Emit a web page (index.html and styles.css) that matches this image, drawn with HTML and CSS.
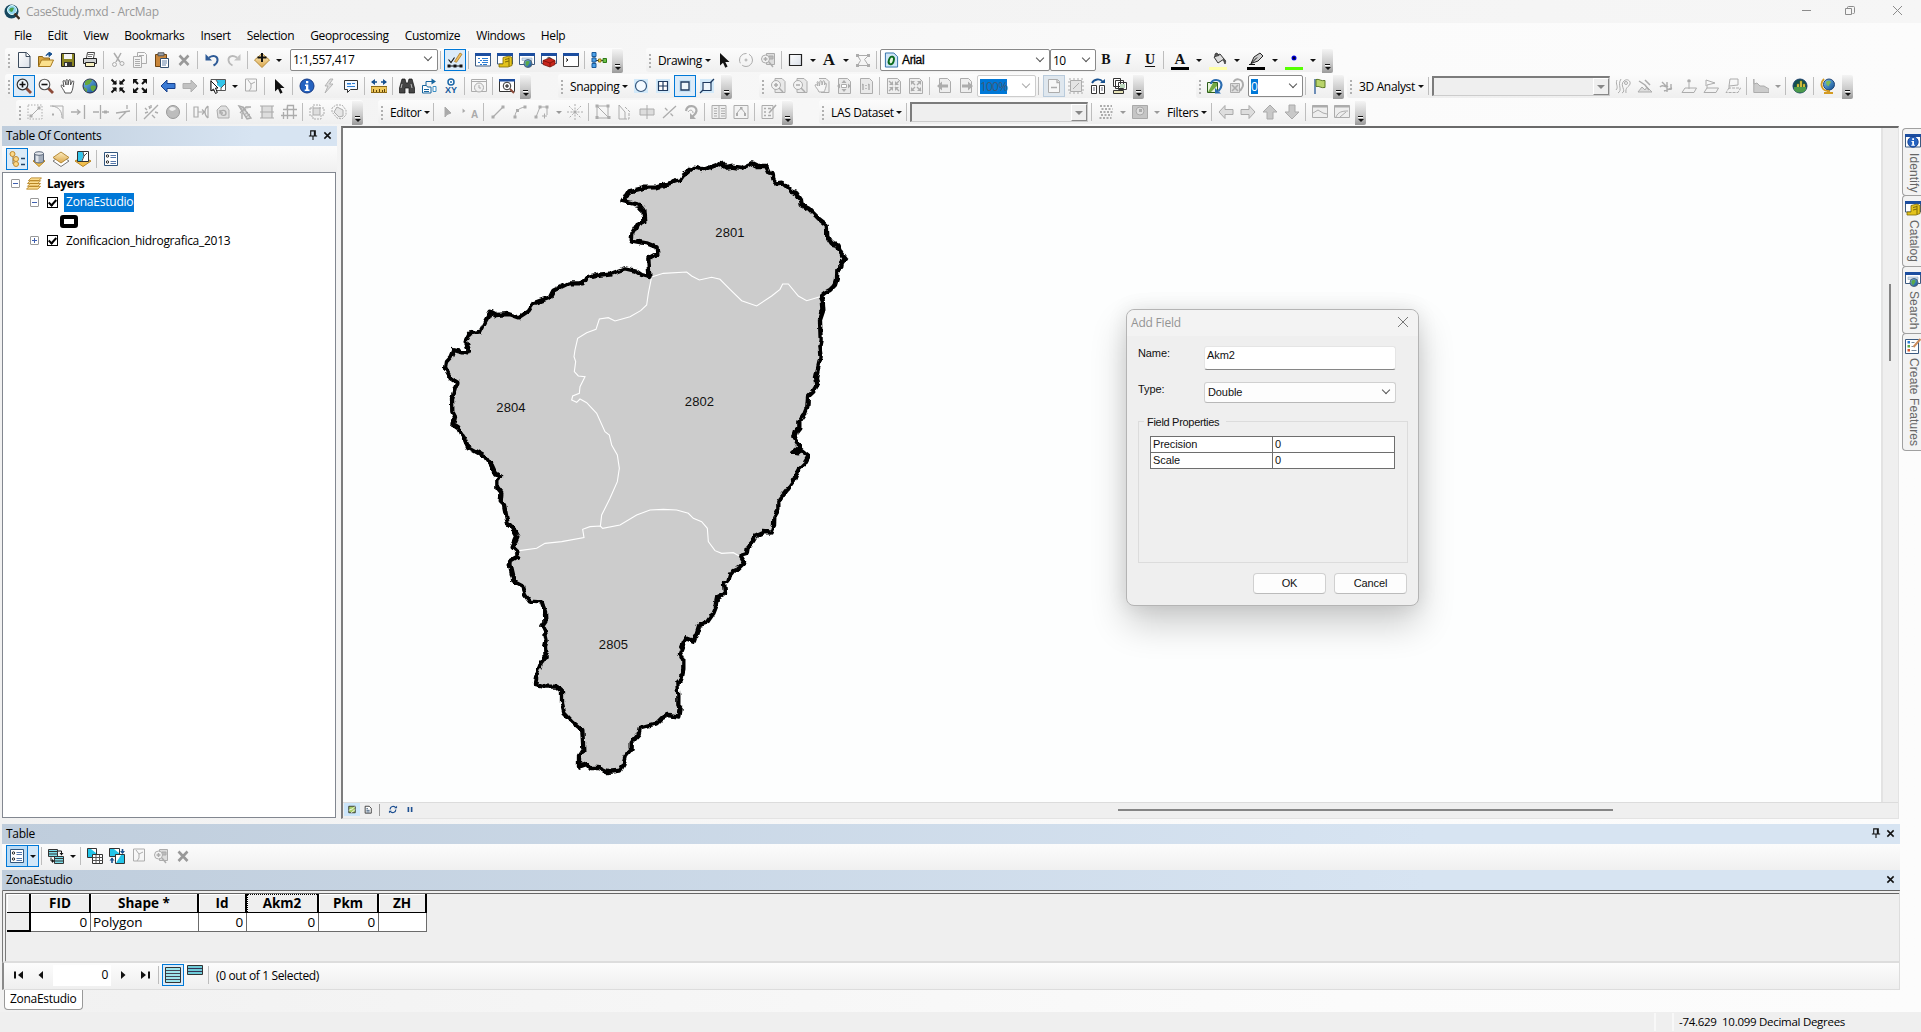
FILE: index.html
```html
<!DOCTYPE html>
<html lang="en">
<head>
<meta charset="utf-8">
<title>CaseStudy.mxd - ArcMap</title>
<link rel="stylesheet" href="styles.css">
</head>
<body>
<svg class="sprite" aria-hidden="true">
<defs>
<linearGradient id="gGlobe" x1="0" y1="0" x2="1" y2="1"><stop offset="0" stop-color="#7cc4f0"/><stop offset="1" stop-color="#0d4a8c"/></linearGradient>
<linearGradient id="gTan" x1="0" y1="0" x2="0" y2="1"><stop offset="0" stop-color="#fdeec0"/><stop offset="1" stop-color="#dba64a"/></linearGradient>
<linearGradient id="gPaper" x1="0" y1="0" x2="1" y2="1"><stop offset="0" stop-color="#fff"/><stop offset="1" stop-color="#d9dfe8"/></linearGradient>
<filter id="rough" x="-5%" y="-5%" width="110%" height="110%"><feTurbulence type="fractalNoise" baseFrequency=".05" numOctaves="2" seed="4"/><feDisplacementMap in="SourceGraphic" scale="15" xChannelSelector="R" yChannelSelector="G"/></filter>
</defs>
<symbol id="new" viewBox="0 0 16 16"><path d="M2.500 .5h8l3.500 3.500v11.500h-11.500z" fill="url(#gPaper)" stroke="#3b4a5c"/><path d="M10 .5v4h4" fill="#fff" stroke="#3b4a5c"/></symbol>
<symbol id="open" viewBox="0 0 16 16"><path d="M.5 14.500v-10h4l1 1.500h6v3" fill="#d9a640" stroke="#8d6415"/><path d="M.5 14.500l3-6.500h12l-3 6.500z" fill="#fbe08c" stroke="#a87a20"/><path d="M8 4c1-3 3-3 4.500-2.500M11 0l3 2-3 2.500z" stroke="#17508f" fill="#17508f" stroke-width="1"/></symbol>
<symbol id="save" viewBox="0 0 16 16"><path d="M1.500 1.500h13v13h-13z" fill="#8a8422" stroke="#222"/><path d="M4 2h8v5h-8z" fill="#f4f4f4"/><path d="M4 10h8v4.500h-8z" fill="#333"/><path d="M5 11h2v3h-2z" fill="#eee"/></symbol>
<symbol id="print" viewBox="0 0 16 16"><path d="M4.500 6l1-5.500h7l-1 5.500" fill="#fff" stroke="#444"/><path d="M1.500 6.500h13v5h-13z" fill="#cfd2d4" stroke="#222"/><path d="M3.500 10.500h9v4h-9z" fill="#f7f0c0" stroke="#222"/><path d="M6 2.500h5M6 4.500h4" stroke="#777"/></symbol>
<symbol id="cut" viewBox="0 0 16 16"><g class="g"><path d="M4 1l6 9M11 1L6 10" stroke-width="1.500"/><circle cx="4.500" cy="12.500" r="2"/><circle cx="12" cy="11.500" r="2"/></g></symbol>
<symbol id="copy" viewBox="0 0 16 16"><g class="g"><path d="M5.500 .5h7l2 2v9h-9z"/><path d="M1.500 4.500h8v11h-8z" fill="#f3f3f3"/><path d="M3 7.500h5M3 9.500h5M3 11.500h5M3 13.500h5M7 3.500h5"/></g></symbol>
<symbol id="paste" viewBox="0 0 16 16"><path d="M1.500 2.500h11v12h-11z" fill="#c9863a" stroke="#6d4412"/><path d="M4 .8h6v3H4z" fill="#9aa0a8" stroke="#555"/><path d="M6.500 6.500h8v9h-8z" fill="#fff" stroke="#35506f"/><path d="M8 9h5M8 11h5M8 13h4" stroke="#6482a8"/></symbol>
<symbol id="del" viewBox="0 0 16 16"><path d="M3.500 3.500l9 9.500M12.500 3.500l-9 9.500" stroke="#999" stroke-width="2.600" fill="none"/></symbol>
<symbol id="undo" viewBox="0 0 16 16"><path d="M5 5.500c5-3 9-1 8.500 3-.3 2.500-2 4-4 5" fill="none" stroke="#2d5a96" stroke-width="2"/><path d="M1.500 2v6.500h6.500z" fill="#2d5a96"/></symbol>
<symbol id="redo" viewBox="0 0 16 16"><path d="M11 5.500c-5-3-9-1-8.500 3 .3 2.500 2 4 4 5" fill="none" stroke="#b9b9b9" stroke-width="1.800"/><path d="M14.500 2v6.500h-6.500z" fill="#c4c4c4"/></symbol>
<symbol id="add" viewBox="0 0 16 16"><path d="M8 1.500l7.500 6.500-7.500 7.500L.5 8z" fill="url(#gTan)" stroke="#b58b3a"/><path d="M7 1h2v3.500h3.500v2H9V10H7V6.500H3.500v-2H7z" fill="#111"/></symbol>
<symbol id="edtb" viewBox="0 0 16 16"><path d="M1.500 7.500l2.500 3 3.500-5" fill="none" stroke="#111" stroke-width="1.100"/><path d="M7.500 9.500l5.500-8.500 2 1.300-5.500 8z" fill="#f0c060" stroke="#a06a10" stroke-width=".7"/><path d="M1.500 14h13" stroke="#111"/><path d="M.5 12.500h3v3h-3zM6.500 12.500h3v3h-3zM12.500 12.500h3v3h-3z" fill="#111"/></symbol>
<symbol id="toc" viewBox="0 0 16 16"><path d="M.5 1.500h15v12.500h-15z" fill="#fff" stroke="#3c5a80"/><path d="M0 1h16v3H0z" fill="#1c4ea0"/><path d="M3 6.500h2M7 6.500h6M5 8.500h2M8 8.500h5M3 10.500h2M7 10.500h6M5 12.500h2M8 12.500h4" stroke="#2d7dd2"/></symbol>
<symbol id="cat" viewBox="0 0 16 16"><path d="M.5 1.500h15v10.500h-15z" fill="#fff" stroke="#3c5a80"/><path d="M0 1h16v3H0z" fill="#1c4ea0"/><path d="M6 5.500l6-1.500 3 1.500v8l-4 1.500h-9v-3h4z" fill="#e3c31d" stroke="#7f6a05" stroke-width=".8"/><path d="M8 7.500l4-1M8 10l4-1M12 5.500v9" stroke="#7f6a05" fill="none"/></symbol>
<symbol id="search" viewBox="0 0 16 16"><path d="M.5 1.500h15v11h-15z" fill="#fff" stroke="#3c5a80"/><path d="M0 1h16v3H0z" fill="#1c4ea0"/><path d="M3 6h10v2.500H3z" fill="#cfe2f5" stroke="#9ab" stroke-width=".6"/><circle cx="9" cy="11.500" r="4" fill="url(#gGlobe)" stroke="#567"/><path d="M6.500 10c2-2 3 0 4-1 0 3-1 3-2 5-2 0-2-2-2-4z" fill="#5aa848"/></symbol>
<symbol id="tbx" viewBox="0 0 16 16"><path d="M.5 1.500h15v10h-15z" fill="#fff" stroke="#3c5a80"/><path d="M0 1h16v3H0z" fill="#1c4ea0"/><path d="M2 8.500l7-2.500 5 2.500v4l-5 2.500-7-2.500z" fill="#c8261d" stroke="#731008" stroke-width=".8"/><path d="M2 8.500l7 2.500 5-2.500M9 11v4" stroke="#731008" fill="none" stroke-width=".8"/><path d="M6 6.500c1-2 4-1 4 .5" stroke="#333" fill="none"/></symbol>
<symbol id="py" viewBox="0 0 16 16"><path d="M.5 1.500h15v13h-15z" fill="#fff" stroke="#444"/><path d="M0 1h16v3H0z" fill="#1c4ea0"/><path d="M3 6.500l2 1.500-2 1.500" stroke="#111" fill="none"/></symbol>
<symbol id="model" viewBox="0 0 16 16"><path d="M3 3v10M3 8.500h12" stroke="#333" fill="none"/><path d="M1 .5h4v4H1zM1 11.500h4v4H1zM1 6h4v4H1z" fill="#4aa0e8" stroke="#1b5a9a"/><path d="M7.500 7h2.500v3H7.500z" fill="#f6d23c" stroke="#8b7310"/><path d="M12 6.500h3.500v4H12z" fill="#6cc048" stroke="#2e7a18"/></symbol>
<symbol id="zin" viewBox="0 0 16 16"><path d="M10 10l5 5" stroke="#8c4a38" stroke-width="2.800"/><circle cx="6.500" cy="6.500" r="5.300" fill="#eef5fb" stroke="#333" stroke-width="1.200"/><path d="M3.500 6.500h6M6.500 3.500v6" stroke="#111" stroke-width="1.600"/></symbol>
<symbol id="zout" viewBox="0 0 16 16"><path d="M10 10l5 5" stroke="#8c4a38" stroke-width="2.800"/><circle cx="6.500" cy="6.500" r="5.300" fill="#f8fafc" stroke="#555" stroke-width="1.100"/><path d="M3.500 6.500h6" stroke="#111" stroke-width="1.600"/></symbol>
<symbol id="hand" viewBox="0 0 16 16"><path d="M5 15C4 12 1 9 1 7.500c1-1 2 0 3 1.500L3 3c1-1 2 0 2.300 1L6 7V2c1-1 2 0 2 1v4l1-5c1-1 2 0 1.800 1L10.500 7l2-4c1-.5 1.500.5 1.200 1.500C13 8 13 12 11 15z" fill="#fff" stroke="#444" stroke-width=".9"/></symbol>
<symbol id="globe" viewBox="0 0 16 16"><circle cx="8" cy="8" r="7" fill="url(#gGlobe)" stroke="#224"/><path d="M3 4c2-3 6-3 7-2 0 2-2 2-2 4-2 0-3 2-5 1zM9 8c3-1 5 0 5 1-1 3-3 5-4 4-1-2-2-3-1-5zM2 9l3 2v3c-2-1-3-3-3-5z" fill="#67a83c"/></symbol>
<symbol id="fixin" viewBox="0 0 16 16"><path d="M1.500 1.500L6 6M14.500 1.500L10 6M1.500 14.500L6 10M14.500 14.500L10 10" stroke="#111" stroke-width="2"/><path d="M2 6.500h4.500V2zM14 6.500H9.500V2zM2 9.500h4.500V14zM14 9.500H9.500V14z" fill="#111"/></symbol>
<symbol id="fixout" viewBox="0 0 16 16"><path d="M2 2l4 4M14 2l-4 4M2 14l4-4M14 14l-4-4" stroke="#111" stroke-width="2"/><path d="M1 1h5L1 6zM15 1h-5l5 5zM1 15h5l-5-5zM15 15h-5l5-5z" fill="#111"/></symbol>
<symbol id="back" viewBox="0 0 16 16"><path d="M1 8l6-6v3.500h8v5H7V14z" fill="#3a7ad4" stroke="#17408c"/></symbol>
<symbol id="fwd" viewBox="0 0 16 16"><path d="M15 8L9 2v3.500H1v5h8V14z" fill="#c2c2c2" stroke="#b0b0b0"/></symbol>
<symbol id="sel" viewBox="0 0 16 16"><path d="M1 1.500h14.500v11H1z" fill="#fff" stroke="#555"/><path d="M7 2h8v4l-4 4-4-3z" fill="#33c5ea"/><path d="M11 10l4-4M8 5L6 2M11 10v2" stroke="#555" fill="none"/><path d="M1 3v10l2.500-2 2 4.500 1.800-1L5.500 10H8z" fill="#fff" stroke="#111"/></symbol>
<symbol id="clear" viewBox="0 0 16 16"><g class="g"><path d="M2.500 1h11v12h-11z"/><path d="M5 2l3 4 4-2M8 6v4l-2 3"/></g></symbol>
<symbol id="arrow" viewBox="0 0 16 16"><path d="M4 1v12.500l3-2.700 2.300 5 2.300-1.200-2.300-4.600H13.500z" fill="#111"/></symbol>
<symbol id="info" viewBox="0 0 16 16"><circle cx="8" cy="8" r="7" fill="#2563c0" stroke="#153a86"/><path d="M7 3h2.300v2.200H7zM6 6.500h3.300v5h1.200V13H5.700v-1.500H7V8H6z" fill="#fff"/></symbol>
<symbol id="bolt" viewBox="0 0 16 16"><path d="M9 1L4 8h3l-3 7 8-9H8.500L12 1z" fill="#ddd" stroke="#aaa" stroke-width=".8"/></symbol>
<symbol id="popup" viewBox="0 0 16 16"><path d="M1.500 2.500h13v9h-7l-3 3v-3h-3z" fill="#f5f9ff" stroke="#333"/><path d="M4 5h4v1.500H4zM4 8h8v1H4zM9 5h3v1H9z" fill="#2d7dd2"/></symbol>
<symbol id="measure" viewBox="0 0 16 16"><path d="M0 8.500h16v6H0z" fill="#f1c95e" stroke="#8d6a15"/><path d="M2.500 14v-3M5.500 14v-2M8.500 14v-3M11.500 14v-2M13.500 14v-3" stroke="#5d440b"/><path d="M1 4h5M10 4h5" stroke="#17508f" stroke-width="1.500"/><path d="M0 4l4-3v6zM16 4l-4-3v6z" fill="#17508f"/></symbol>
<symbol id="binoc" viewBox="0 0 16 16"><path d="M3 1h3l1 4h2l1-4h3l2.500 9v5H10v-5H6v5H.5v-5z" fill="#444" stroke="#111" stroke-width=".7"/><path d="M3 6l-1 4M12 6l1 4" stroke="#bbb"/></symbol>
<symbol id="route" viewBox="0 0 16 16"><path d="M1.500 7.500h4l1 1.500h3.500v6h-8.500z" fill="#fff" stroke="#17659e"/><path d="M3 11.500h5M3 13.500h5M5 7V3.500h7" stroke="#17659e" fill="none"/><path d="M10.500 .5l4.500 3-4.500 3z" fill="#17659e"/><path d="M12 8.500h3v5h-3z" fill="#fff" stroke="#3d8fc4"/></symbol>
<symbol id="xy" viewBox="0 0 16 8"><circle cx="8" cy="4" r="3" fill="#fff" stroke="#1b67a8" stroke-width="1.500"/><circle cx="8" cy="4" r="1" fill="#1b67a8"/></symbol>
<symbol id="clock" viewBox="0 0 16 16"><g class="g"><path d="M.5 1.500h15v12H.5zM.5 3.500h15"/><circle cx="8" cy="9.500" r="4.500" fill="#f0f0f0"/><path d="M8 7v3h2"/></g></symbol>
<symbol id="viewer" viewBox="0 0 16 16"><path d="M.5 1.500h15v12H.5z" fill="#fff" stroke="#333"/><path d="M0 1h16v2.500H0z" fill="#1c4ea0"/><path d="M11 11l4 4" stroke="#8c4a38" stroke-width="2"/><circle cx="8" cy="8" r="3.800" fill="#fff" stroke="#333"/><path d="M6 8h4M8 6v4" stroke="#111"/></symbol>
<symbol id="rot" viewBox="0 0 16 16"><g class="g"><circle cx="8" cy="8" r="6.500" stroke-dasharray="14 2.500"/><circle cx="8" cy="8" r="1"/></g></symbol>
<symbol id="zsel" viewBox="0 0 16 16"><g class="g"><path d="M6.500 1.500h8v11h-8z" fill="#ddd"/><path d="M9 4h4v3H9z" fill="#bbb"/><circle cx="5.500" cy="7" r="4" fill="#f3f3f3"/><path d="M5.500 5v4M3.500 7h4M9 10l4 5" stroke-width="1.500"/></g></symbol>
<symbol id="rect" viewBox="0 0 16 16"><path d="M1.500 2.500h12v11h-12z" fill="url(#gPaper)" stroke="#222" stroke-width="1.200"/></symbol>
<symbol id="verts" viewBox="0 0 16 16"><g class="g"><path d="M2.500 3.500h11l-4 4 4 6h-11l3-5z"/><path class="gf" d="M1 2h3v3H1zM12 2h3v3h-3zM1 12h3v3H1zM12 12h3v3h-3z"/></g></symbol>
<symbol id="font" viewBox="0 0 16 16"><path d="M1.500 .5h9l4 4v11h-13z" fill="#cfe6f8" stroke="#2d6ea8"/><ellipse cx="7.800" cy="8.500" rx="2.600" ry="4.200" transform="rotate(18 7.800 8.500)" fill="#e8f6e0" stroke="#0a6a1e" stroke-width="2"/></symbol>
<symbol id="bucket" viewBox="0 0 20 14"><path d="M6 5l6-3 4 5-6 4z" fill="#ddd" stroke="#333"/><path d="M7 5c-1-5 3-5 4-1M16 7c2 1 2 3 1 5-1-2-1-3-2-4" fill="#555" stroke="#333" stroke-width=".8"/></symbol>
<symbol id="pen" viewBox="0 0 20 14"><path d="M5 11.500l3-6.500 6-4 3 3-5 5z" fill="#ccc" stroke="#222"/><path d="M5 11.500l6-6M3 12.500h6" stroke="#111"/></symbol>
<symbol id="mark" viewBox="0 0 20 14"><circle cx="10" cy="6" r="2.500" fill="#00e"/><circle cx="10" cy="6" r="1.500" fill="#003"/></symbol>
<symbol id="scirc" viewBox="0 0 16 16"><path d="M1 1h14v14H1z" fill="#d3eafa"/><circle cx="8" cy="8" r="5.500" fill="#f4faff" stroke="#33557c" stroke-width="1.200"/></symbol>
<symbol id="sgrid" viewBox="0 0 16 16"><path d="M1 1h14v14H1z" fill="#d3eafa"/><path d="M3.500 3.500h9v9h-9zM8 3.500v9M3.500 8h9" fill="#fff" stroke="#1f3a5f" stroke-width="1.200"/></symbol>
<symbol id="svert" viewBox="0 0 16 16"><path d="M2 2h12v12H2z" fill="#c4e0f5"/><path d="M4 4h8v8H4z" fill="#eef6fc" stroke="#1f3a5f" stroke-width="1.300"/></symbol>
<symbol id="sedge" viewBox="0 0 16 16"><path d="M1 1h14v14H1z" fill="#d3eafa"/><path d="M4 4.500h8v8H4z" fill="#eef6fc" stroke="#1f3a5f" stroke-width="1.200"/><path d="M1 15l3-3M11 5l4-4" stroke="#1f3a5f" stroke-width="1.300"/></symbol>
<symbol id="pzin" viewBox="0 0 16 16"><g class="g"><path d="M5 .5h7l3 3v11H5z" fill="#e9e9e9"/><circle cx="6" cy="7" r="4.500" fill="#f3f3f3"/><path d="M4 7h4M6 5v4M9 10l4 4" stroke-width="1.500"/></g></symbol>
<symbol id="pzout" viewBox="0 0 16 16"><g class="g"><path d="M5 .5h7l3 3v11H5z" fill="#e9e9e9"/><circle cx="6" cy="7" r="4.500" fill="#f3f3f3"/><path d="M4 7h4M9 10l4 4" stroke-width="1.500"/></g></symbol>
<symbol id="ppan" viewBox="0 0 16 16"><g class="g"><path d="M5 .5h7l3 3v11H7" fill="#eee"/><path d="M5 14C4 11 1 9 1 7c1-1 2 0 3 1L3 4c1-1 2 0 2.500 4L6 3c1-1 2 0 2 4l1-4c1-1 2 0 1.500 4l1-2c2 0 0 6-1.500 9z" fill="#f6f6f6"/></g></symbol>
<symbol id="pfull" viewBox="0 0 16 16"><g class="g"><path d="M2.500 .5h9l3 3v12h-12z" fill="#e9e9e9"/><path class="gf" d="M8 2l2.500 3h-5zM8 14l2.500-3h-5zM1 8l3-2.500v5zM15 8l-3-2.500v5z"/><path d="M5.500 6.500h5v3h-5z" fill="#fff"/></g></symbol>
<symbol id="p11" viewBox="0 0 16 16"><g class="g"><path d="M2.500 .5h9l3 3v12h-12z" fill="#e9e9e9"/><path d="M5 6v6M11 6v6M8 7v1M8 10v1M4 6.500h1M10 6.500h1" stroke-width="1.400"/></g></symbol>
<symbol id="pin4" viewBox="0 0 16 16"><g class="g"><path d="M1.500 .5h10l3 3v12h-13z" fill="#eee"/><path class="gf" d="M3 7h4V3zM13 7H9V3zM3 9h4v4zM13 9H9v4z"/><path d="M3 3l4 4M13 3L9 7M3 13l4-4M13 13L9 9" stroke-width="1.300"/></g></symbol>
<symbol id="pout4" viewBox="0 0 16 16"><g class="g"><path d="M1.500 .5h10l3 3v12h-13z" fill="#eee"/><path class="gf" d="M3 3h4L3 7zM13 3H9l4 4zM3 13h4L3 9zM13 13H9l4-4z"/><path d="M3 3l4 4M13 3L9 7M3 13l4-4M13 13L9 9" stroke-width="1.300"/></g></symbol>
<symbol id="pback" viewBox="0 0 16 16"><g class="g"><path d="M3.500 .5h8l3 3v11h-11z" fill="#eee"/><path class="gf" d="M1 8l5-4.500v3h6v3H6v3z"/></g></symbol>
<symbol id="pfwd" viewBox="0 0 16 16"><g class="g"><path d="M2.500 .5h8l3 3v11h-11z" fill="#eee"/><path class="gf" d="M15 8l-5-4.500v3H4v3h6v3z"/></g></symbol>
<symbol id="draft" viewBox="0 0 16 16"><g class="g"><path d="M2.500 1.500h9l2 2v11h-11z" fill="#f7f7f7"/><path d="M5 9.500h6M11 1.500v3h3" stroke-width="1.300"/></g></symbol>
<symbol id="focus" viewBox="0 0 16 16"><g class="g"><path d="M2.500 2.500h11v11h-11z" fill="#e4e4e4"/><path d="M1 1h14v14H1z" stroke-dasharray="2 2"/><path d="M5 11l6-6"/></g></symbol>
<symbol id="chlay" viewBox="0 0 16 16"><path d="M1.500 7.500h5v8h-5zM9.500 7.500h5v8h-5z" fill="#fff" stroke="#333"/><path d="M3 10h2M3 12h2M11 10h2M11 12h2" stroke="#667"/><path d="M2 5c2-4 8-5 11-1" fill="none" stroke="#17508f" stroke-width="1.800"/><path d="M10 5h5V1z" fill="#17508f"/></symbol>
<symbol id="ddp" viewBox="0 0 16 16"><path d="M1.500 .5h7v8h-7zM3.500 2.500h8v8h-8zM6.500 4.500h8v7h-8z" fill="#fff" stroke="#333"/><path d="M8 6h5v4H8z" fill="#bcd8bc"/><path d="M1.500 12.500h10v3h-10z" fill="#e8e4b8" stroke="#333"/></symbol>
<symbol id="refr" viewBox="0 0 16 16"><path d="M.5 4.500h10v10h-10z" fill="#e9f4dd" stroke="#2c5d1a"/><path d="M1 14l5-9h4v3L4 14z" fill="#74a944"/><path d="M4 6c0-5 10-6 10.500 1 0 3-1 4-3 6" fill="none" stroke="#2b6cb0" stroke-width="2.200"/><path d="M8 10v5.500h6z" fill="#2b6cb0"/></symbol>
<symbol id="grefr" viewBox="0 0 16 16"><g class="g"><path d="M1.500 5.500h9v9h-9z" fill="#ddd"/><path d="M3 7l6 6M9 7l-6 6" stroke-width="1.600"/><path d="M5 4c0-4 9-4 9 3 0 3-2 4-3 6" stroke-width="2"/></g></symbol>
<symbol id="flag" viewBox="0 0 16 16"><path d="M3 1v15" stroke="#4c74a8" stroke-width="1.600"/><path d="M4 1.500c3-1 5 2 9 1v7c-4 1-6-2-9-1z" fill="#b9d46a" stroke="#5c7a26"/></symbol>
<symbol id="contour" viewBox="0 0 16 16"><g class="g"><circle cx="11" cy="5" r="1.500"/><path d="M7 15c5-2-3-8 2-12 3-3 7 0 6 3s-5 3-4 9M3 15c5-3-1-8 3-14M1 12c3-3-1-6 1-10"/></g></symbol>
<symbol id="steep" viewBox="0 0 16 16"><g class="g"><path d="M1 14l4-5 3 3 2-3 5 5z" fill="#ddd"/><path d="M2 3l6 4 4 5M8 2l5 5" stroke-width="1.500"/></g></symbol>
<symbol id="los" viewBox="0 0 16 16"><g class="g"><path d="M1 9c3-4 5 2 8-1M3 4l5 5M8 4v10M5 13l8-3M12 6v6" stroke-width="1.400"/></g></symbol>
<symbol id="ip" viewBox="0 0 16 16"><g class="g"><circle cx="8" cy="3" r="1.800" class="gf"/><path d="M8 5v6M4 10L1 14.500h12L15.500 10z"/></g></symbol>
<symbol id="il" viewBox="0 0 16 16"><g class="g"><path d="M3 2l9 3-8 2M4 7v3M4 10L1 14.500h12L15.500 10zM3 2v6"/></g></symbol>
<symbol id="ig" viewBox="0 0 16 16"><g class="g"><path d="M5 1h8v6L4 8zM4 8v3"/><path d="M4 10L1 14.500h12L15.500 10z" stroke-dasharray="3 1"/></g></symbol>
<symbol id="prof" viewBox="0 0 16 16"><g class="g"><path d="M.8 1v13.500H16V11l-5-3-4 0-3-3-3 1z" fill="#ccc"/></g></symbol>
<symbol id="scene" viewBox="0 0 16 16"><circle cx="8" cy="8" r="7" fill="#12504e" stroke="#1b3f6b"/><path d="M2 9h12v3l-3 2.500H5L2 12z" fill="#4b9a4b"/><path d="M5 9V6h2v3M8 9V3h2v6M11 9V6h2v3" fill="#e6cf45" stroke="#8b7a15" stroke-width=".5"/></symbol>
<symbol id="aglobe" viewBox="0 0 16 16"><path d="M4 1c-5 5-2 13 6 12" fill="none" stroke="#d49b22" stroke-width="1.800"/><circle cx="9" cy="6.500" r="5.500" fill="url(#gGlobe)" stroke="#247"/><path d="M6 4c2-2 4-1 5 0-1 2-2 2-2 4-2 0-3-2-3-4z" fill="#7dbb55"/><path d="M8 12v2M4 15h9" stroke="#d49b22" stroke-width="2"/></symbol>
<symbol id="e1" viewBox="0 0 16 16"><g class="g"><path d="M1 1h14v14H1z" stroke-dasharray="1.500 1.500"/><path d="M4 12l8-8" /><path class="gf" d="M2.500 10.500h3v3h-3zM10.500 2.500h3v3h-3z"/></g></symbol>
<symbol id="e2" viewBox="0 0 16 16"><g class="g"><path d="M1 2h13v13M3 2c7 1 10 5 10 12"/><path class="gf" d="M3 9.500h2v2H3z"/></g></symbol>
<symbol id="e3" viewBox="0 0 16 16"><g class="g"><path d="M0 8h9M13.500 1v14M6 5.500l3 2.500-3 2.500" stroke-width="1.300"/></g></symbol>
<symbol id="e4" viewBox="0 0 16 16"><g class="g"><path d="M0 8h6M7.500 1v14M9 8h7" stroke-width="1.300"/><path class="gf" d="M11 6.500h3v3h-3z"/></g></symbol>
<symbol id="e5" viewBox="0 0 16 16"><g class="g"><path d="M1 9l14-2M12 1v4M11 8L4 15" stroke-width="1.300"/></g></symbol>
<symbol id="e6" viewBox="0 0 16 16"><g class="g"><path d="M1 15L15 1M2 4l2 2M8 1v3M12 8l3 1M9 11l3 3M6 2l1 3M2 9l3-1" stroke-width="1.400"/></g></symbol>
<symbol id="ball" viewBox="0 0 16 16"><circle cx="8" cy="8" r="6.500" fill="#bdbdbd" stroke="#999"/><path d="M4 5c2-3 6-2 7 0-2 2-5 3-7 0z" fill="#eee"/></symbol>
<symbol id="e7" viewBox="0 0 16 16"><g class="g"><path d="M1 3h4v10H1zM15 2c-4 3-4 9 0 12M5 8h6M9 5.500L11.500 8 9 10.500M15 2v12" stroke-width="1.200"/></g></symbol>
<symbol id="e8" viewBox="0 0 16 16"><g class="g"><path d="M2 6l4-4h5l3 4v8H3z" fill="#e0e0e0"/><path d="M5 9c1-4 6-3 6 0s-4 3-5 1M5 6v3h3" stroke-width="1.400"/></g></symbol>
<symbol id="e9" viewBox="0 0 16 16"><g class="g"><path d="M2 2l4 1 8 11-4 1zM5 15V9M3 9l6-6 5 0" stroke-width="1.400" fill="#ddd"/><path d="M3 5l4-2M5 8l4-3M7 11l4-3M9 13l4-3"/></g></symbol>
<symbol id="e10" viewBox="0 0 16 16"><g class="g"><path d="M3 2h10v12H3zM1 2h14M1 8h14M1 14h14" fill="#ddd" stroke-width="1.200"/></g></symbol>
<symbol id="e11" viewBox="0 0 16 16"><g class="g"><path d="M6.500 1v14M12.500 1v14M2 5.500h14M0 11.500h16M2.500 8v7M6 5.500h6.500V1.500H6.500z" stroke-width="1.300"/></g></symbol>
<symbol id="e12" viewBox="0 0 16 16"><g class="g"><path d="M1 4h3V1h7v3h4v7h-3v4H4v-3H1z" stroke-dasharray="2 1"/><path d="M4 4h7v7H4z" fill="#ddd"/></g></symbol>
<symbol id="e13" viewBox="0 0 16 16"><g class="g"><path d="M5 1h6l4 5v5l-4 4-5-1-5-6V4z" stroke-dasharray="2 1"/><path d="M6 3l6 3v6l-4 1-5-5z" fill="#e6e6e6"/></g></symbol>
<symbol id="ea" viewBox="0 0 16 16"><path d="M5 3v10l2-2.500L11 9z" fill="#aaa" stroke="#aaa"/></symbol>
<symbol id="tri" viewBox="0 0 16 16"><path d="M1 1v8l5-3.500z" fill="#aaa"/></symbol>
<symbol id="eline" viewBox="0 0 16 16"><g class="g"><path d="M3 13L13 3" stroke-width="1.300"/><path class="gf" d="M1.500 11.500h3v3h-3zM11.500 1.500h3v3h-3z"/></g></symbol>
<symbol id="earc" viewBox="0 0 16 16"><g class="g"><path d="M3 13C3 7 7 4 13 3"/><path class="gf" d="M1.500 11.500h3v3h-3zM4 5h3v3H4zM11.500 1.500h3v3h-3z"/></g></symbol>
<symbol id="etr" viewBox="0 0 16 16"><g class="g"><path d="M2 13L6 3h7v8"/><path class="gf" d="M.5 11.500h3v3h-3zM4.500 1.500h3v3h-3zM11.500 1.500h3v3h-3z"/><path d="M8 12h5M10.500 9.500v5"/></g></symbol>
<symbol id="epoint" viewBox="0 0 16 16"><g class="g"><path d="M8 0v16M0 8h16M2 2l12 12M14 2L2 14" stroke-dasharray="2 1.500"/><path class="gf" d="M6.500 6.500h3v3h-3z"/></g></symbol>
<symbol id="ever" viewBox="0 0 16 16"><g class="g"><path d="M2 2h11v12H2zM2 2l12 12"/><path class="gf" d="M.5 .5h3v3h-3zM11.500 .5h3v3h-3zM.5 12h3v3h-3zM12.500 12h3v3h-3z"/></g></symbol>
<symbol id="eresh" viewBox="0 0 16 16"><g class="g"><path d="M2 1v14h6V8z"/><path d="M8 3l5 5M12 9v6H8" stroke-dasharray="3 1"/></g></symbol>
<symbol id="ecut" viewBox="0 0 16 16"><g class="g"><path d="M1 5h14v6H1z" fill="#ddd"/><path d="M8 1v14"/></g></symbol>
<symbol id="esplit" viewBox="0 0 16 16"><g class="g"><path d="M2 14L15 2M4 4l2.500 2.500M9.500 9.500L12 12" stroke-width="1.300"/></g></symbol>
<symbol id="erot" viewBox="0 0 16 16"><g class="g"><path d="M3 7c1-7 11-6 10.500 0-.5 3-2.500 4-4.500 6" stroke-width="2.200"/><path class="gf" d="M7 9v6h6z"/><path d="M5 8c2-3 5-2 5 1"/></g></symbol>
<symbol id="eattr" viewBox="0 0 16 16"><g class="g"><path d="M1 1.500h14v13H1zM8 2v12M3 4.500h3M3 7h3M3 9.500h3M3 12h3M10 4.500h4M10 7h4M10 9.500h4M10 12h4" fill="#eee"/></g></symbol>
<symbol id="esk" viewBox="0 0 16 16"><g class="g"><path d="M1 1.500h14v13H1zM4 12V9l4-5 4 5v3" fill="#f3f3f3"/><path class="gf" d="M7 3h2.500v2.500H7zM3 9h2v3H3zM11 9h2v3h-2z"/></g></symbol>
<symbol id="ecf" viewBox="0 0 16 16"><g class="g"><path d="M1 1.500h11v13H1z" fill="#f3f3f3"/><path d="M3 4.500h2M3 8h2M3 11.500h2M7 4.500h3M7 11.500h3M15 1L8 9" stroke-width="1.600"/></g></symbol>
<symbol id="las" viewBox="0 0 16 16"><g class="g"><path d="M2 2h12M3.500 5h11M2 8h13M3 11h11M1.500 14h12" stroke-width="2" stroke-dasharray="2 1.500"/></g></symbol>
<symbol id="las2" viewBox="0 0 16 16"><path d="M.5 1.500h15v13H.5z" fill="#c5c5c5" stroke="#a9a9a9"/><circle cx="8" cy="7" r="4" fill="#ddd" stroke="#aaa"/><path d="M7 5h3v3H7z" fill="#aaa"/></symbol>
<symbol id="al" viewBox="0 0 16 16"><path d="M1 8l6-6.500v4h8v5H7v4z" fill="#ddd" stroke="#aaa"/></symbol>
<symbol id="ar" viewBox="0 0 16 16"><path d="M15 8L9 1.500v4H1v5h8v4z" fill="#ddd" stroke="#aaa"/></symbol>
<symbol id="au" viewBox="0 0 16 16"><path d="M8 1L1 8h4v7h6V8h4z" fill="#c8c8c8" stroke="#aaa"/></symbol>
<symbol id="ad" viewBox="0 0 16 16"><path d="M8 15L1 8h4V1h6v7h4z" fill="#c8c8c8" stroke="#aaa"/></symbol>
<symbol id="w1" viewBox="0 0 16 16"><g class="g"><path d="M.5 1.500h15v12H.5z" fill="#eee"/><path d="M.5 2.500h15" stroke-width="2"/><path d="M1 9l5-3 5 3 4 1"/></g></symbol>
<symbol id="w2" viewBox="0 0 16 16"><g class="g"><path d="M.5 1.500h15v12H.5z" fill="#eee"/><path d="M.5 2.500h15" stroke-width="2"/><path d="M2 13C4 8 8 7 14 7M6 13l6-5"/></g></symbol>
<symbol id="lorder" viewBox="0 0 16 16"><path d="M4 5v8M4 9h4" stroke="#8a6a2a" fill="none"/><circle cx="3.500" cy="3" r="2.500" fill="#fbd88a" stroke="#c08a30"/><circle cx="7" cy="8" r="2.500" fill="#fbd88a" stroke="#c08a30"/><circle cx="7" cy="13" r="2.500" fill="#fbd88a" stroke="#c08a30"/><path d="M12 7.500h4M12 13.500h4" stroke="#246" stroke-width="1.500"/></symbol>
<symbol id="lsrc" viewBox="0 0 16 16"><path d="M2 10l6 5.500 6-5.500-6-3z" fill="#f2c04e" stroke="#b88520"/><path d="M3.500 2.500v8c2 2 7 2 9 0v-8z" fill="#a3adbb" stroke="#5c687a"/><path d="M5 4v7h2.500V4z" fill="#dfe4ea"/><ellipse cx="8" cy="2.500" rx="4.500" ry="1.800" fill="#e4e8ee" stroke="#5c687a"/></symbol>
<symbol id="lvis" viewBox="0 0 16 16"><path d="M0 10l8 5.500 8-5.500-8-5z" fill="#fff" stroke="#777"/><path d="M0 6.500L8 1l8 5.500-8 5.500z" fill="url(#gTan)" stroke="#b58b3a"/></symbol>
<symbol id="lsel" viewBox="0 0 16 16"><path d="M0 10l8 5.500 8-5.500-8-4z" fill="#f2c04e" stroke="#b88520"/><path d="M2.500 .5h11v10h-11z" fill="#fff" stroke="#333"/><path d="M3 1h4.500l1 4-2 5H3z" fill="#33c5ea"/><path d="M8 1l1 4-2 5M9 5l3-3" stroke="#444" fill="none"/></symbol>
<symbol id="opts" viewBox="0 0 16 16"><path d="M1.500 1.500h13v13h-13z" fill="#fff" stroke="#31557c"/><circle cx="4.500" cy="5" r="1.200" fill="none" stroke="#222"/><circle cx="4.500" cy="11" r="1.200" fill="none" stroke="#222"/><path d="M7.500 4.500h5.500M7.500 6.500h5.500M7.500 10.500h5.500M7.500 12.500h5.500" stroke="#57a"/></symbol>
<symbol id="layers" viewBox="0 0 16 16"><path d="M0 14l3-3h12l-3 3zM1 11l3-3h11l-3 3zM1 8l3-3h11l-3 3zM2 5l3-3h11l-3 3z" fill="#fbdc90" stroke="#b58320" stroke-width=".9"/></symbol>
<symbol id="pinn" viewBox="0 0 10 12"><path d="M2.500 1h5v5.500h-5zM.5 6.500h9M5 7v4M6.500 1v5" stroke="#111" fill="none" stroke-width="1.200"/></symbol>
<symbol id="x" viewBox="0 0 10 10"><path d="M1.500 1.500l7 7M8.500 1.500l-7 7" stroke="#111" stroke-width="1.700"/></symbol>
<symbol id="rel" viewBox="0 0 16 16"><path d="M.5 1.500h9v7h-9zM6.500 8.500h9v7h-9z" fill="#7cdce8" stroke="#333"/><path d="M.5 3.500h9M.5 6h9M6.500 10.500h9M6.500 13h9" stroke="#333"/><path d="M10 3h3.500v3M3 9.500V13h2" stroke="#111" fill="none"/><path d="M11.500 5h4l-2 2.500zM4 11l2.500 2L4 15z" fill="#111"/></symbol>
<symbol id="selatt" viewBox="0 0 16 16"><path d="M.5 .5h9v9h-9z" fill="#22c4e8" stroke="#333"/><path d="M4 1l5 4V1z" fill="#fff"/><path d="M5.500 6.500h10v9h-10z" fill="#fff" stroke="#333"/><path d="M5.500 9.500h10M5.500 12.500h10M9 7v8M12.500 7v8" stroke="#555"/></symbol>
<symbol id="switch" viewBox="0 0 16 16"><path d="M.5 .5h10v8h-10zM6.500 6.500h9v9h-9z" fill="#22c4e8" stroke="#333"/><path d="M5 1l5 4V1zM7 15l5-8H7z" fill="#fff"/><path d="M13.500 1v4M3 10v5" stroke="#17508f" stroke-width="1.600"/><path d="M11 3h5l-2.500 3zM.5 12.500h5L3 9.500z" fill="#17508f"/></symbol>
<symbol id="recall" viewBox="0 0 16 16"><path d="M.5 .5h15v15H.5z" fill="#9fe4ec" stroke="#333"/><path d="M1 3.500h14M1 6.500h14M1 9.500h14M1 12.500h14" stroke="#445"/></symbol>
<symbol id="recsel" viewBox="0 0 16 16"><path d="M.5 .5h15v9H.5z" fill="#6fcbd8" stroke="#333"/><path d="M1 3.500h14M1 6.500h14" stroke="#335"/></symbol>
<symbol id="first" viewBox="0 0 16 16"><path d="M4 4.500v7" stroke="#111" stroke-width="2"/><path d="M12 4v8L7 8z" fill="#111"/></symbol>
<symbol id="prev" viewBox="0 0 16 16"><path d="M10 4v8L5.500 8z" fill="#111"/></symbol>
<symbol id="next" viewBox="0 0 16 16"><path d="M6 4v8l4.500-4z" fill="#111"/></symbol>
<symbol id="last" viewBox="0 0 16 16"><path d="M12 4.500v7" stroke="#111" stroke-width="2"/><path d="M4 4v8L9 8z" fill="#111"/></symbol>
<symbol id="mapv" viewBox="0 0 16 16"><path d="M4 4h8v8H4z" fill="#a9cf6a" stroke="#222"/><path d="M4 9l5-2 3-3M7 12l5-4" stroke="#fff" fill="none"/></symbol>
<symbol id="layv" viewBox="0 0 16 16"><path d="M4.500 4h5l2.500 2.500v6H4.500z" fill="#fff" stroke="#222"/><path d="M6 7h2M6 9h4M6 11h4" stroke="#246"/></symbol>
<symbol id="rfr" viewBox="0 0 16 16"><path d="M4.500 8c0-4 5-5 7-2M11.500 8c0 4-5 5-7 2" stroke="#1d4f91" fill="none" stroke-width="1.400"/><path d="M9.500 6.500h3.500V3.500zM6.500 9.500H3v3z" fill="#1d4f91"/></symbol>
<symbol id="pause" viewBox="0 0 16 16"><path d="M6 5v6M10 5v6" stroke="#1d4f91" stroke-width="2"/></symbol>
<symbol id="logo" viewBox="0 0 16 16"><circle cx="7.500" cy="7.500" r="7" fill="#17475f"/><circle cx="8" cy="6" r="4.500" fill="#8ed3ee" stroke="#dff"/><path d="M5 6c1-3 4-3 5-2-1 2-1 4-3 4z" fill="#4aa04a"/><path d="M10.500 9.500l5 5.500" stroke="#3d2e22" stroke-width="2.400"/></symbol>
<symbol id="create" viewBox="0 0 16 16"><path d="M.5 1.500h13v14H.5z" fill="#fff" stroke="#3c5a80"/><path d="M2.500 3h2.500v2.500h-2.500z" fill="#2d7dd2"/><path d="M2.500 7h2.500v2.500h-2.500z" fill="#5aa848"/><path d="M2.500 11h2.500v2.500h-2.500z" fill="#d9572b"/><path d="M6.500 4.500h3M6.500 8.500h2M6.500 12.500h5" stroke="#789"/><path d="M15.500 1L8.500 9" stroke="#c98a5a" stroke-width="2"/></symbol>
</svg>

<div class="app">
<header class="titlebar"><svg class="logo"><use href="#logo"/></svg><span class="wtitle">CaseStudy.mxd - ArcMap</span>
<svg class="winctl" viewBox="0 0 110 20"><path d="M5 10.500h9M50.500 8.500v-1a1 1 0 0 1 1-1h5a1 1 0 0 1 1 1v5a1 1 0 0 1-1 1h-1M48.500 8.500h6v6h-6zM96 6l9 9M105 6l-9 9" fill="none" stroke="#8c8c8c"/></svg></header>
<nav class="menu"><span>File</span><span>Edit</span><span>View</span><span>Bookmarks</span><span>Insert</span><span>Selection</span><span>Geoprocessing</span><span>Customize</span><span>Windows</span><span>Help</span></nav>

<div class="row">
<div class="tb t-std"><b class="grip"></b><svg class="i"><use href="#new"/></svg><svg class="i"><use href="#open"/></svg><svg class="i"><use href="#save"/></svg><svg class="i"><use href="#print"/></svg><b class="s"></b><svg class="i"><use href="#cut"/></svg><svg class="i"><use href="#copy"/></svg><svg class="i"><use href="#paste"/></svg><svg class="i"><use href="#del"/></svg><b class="s"></b><svg class="i"><use href="#undo"/></svg><svg class="i"><use href="#redo"/></svg><b class="s"></b><svg class="i"><use href="#add"/></svg><b class="d w12"></b><div class="combo c-scale">1:1,557,417<b class="v"></b></div><b class="s"></b><svg class="i on"><use href="#edtb"/></svg><b class="s"></b><svg class="i"><use href="#toc"/></svg><svg class="i"><use href="#cat"/></svg><svg class="i"><use href="#search"/></svg><svg class="i"><use href="#tbx"/></svg><svg class="i"><use href="#py"/></svg><b class="s"></b><svg class="i"><use href="#model"/></svg><b class="o"></b></div>
<div class="tb t-draw"><b class="grip"></b><span class="lb l-draw">Drawing<b class="d"></b></span><svg class="i"><use href="#arrow"/></svg><svg class="i"><use href="#rot"/></svg><svg class="i"><use href="#zsel"/></svg><b class="s"></b><svg class="i"><use href="#rect"/></svg><b class="d"></b><span class="gl big">A</span><b class="d w12"></b><svg class="i"><use href="#verts"/></svg><b class="s"></b><div class="combo c-font"><svg class="fi"><use href="#font"/></svg>Arial<b class="v"></b></div><div class="combo c-size">10<b class="v"></b></div><span class="gl">B</span><span class="gl it">I</span><span class="gl un">U</span><b class="s w8"></b><span class="gl bar">A</span><b class="d w16"></b><span class="gl bar yel"><svg><use href="#bucket"/></svg></span><b class="d w16"></b><span class="gl bar"><svg><use href="#pen"/></svg></span><b class="d w16"></b><span class="gl bar grn"><svg><use href="#mark"/></svg></span><b class="d w16"></b><b class="o tight"></b></div>
</div>
<div class="row">
<div class="tb t-tools"><b class="grip"></b><svg class="i on"><use href="#zin"/></svg><svg class="i"><use href="#zout"/></svg><svg class="i"><use href="#hand"/></svg><svg class="i"><use href="#globe"/></svg><b class="s"></b><svg class="i"><use href="#fixin"/></svg><svg class="i"><use href="#fixout"/></svg><b class="s"></b><svg class="i"><use href="#back"/></svg><svg class="i"><use href="#fwd"/></svg><b class="s"></b><svg class="i"><use href="#sel"/></svg><b class="d"></b><svg class="i"><use href="#clear"/></svg><b class="s"></b><svg class="i"><use href="#arrow"/></svg><b class="s"></b><svg class="i"><use href="#info"/></svg><svg class="i"><use href="#bolt"/></svg><svg class="i"><use href="#popup"/></svg><b class="s"></b><svg class="i"><use href="#measure"/></svg><b class="s"></b><svg class="i"><use href="#binoc"/></svg><svg class="i"><use href="#route"/></svg><span class="gl xyb"><svg><use href="#xy"/></svg>XY</span><b class="s"></b><svg class="i"><use href="#clock"/></svg><b class="s"></b><svg class="i"><use href="#viewer"/></svg><b class="o"></b></div>
<div class="tb t-snap"><b class="grip"></b><span class="lb l-snap">Snapping<b class="d"></b></span><svg class="i"><use href="#scirc"/></svg><svg class="i"><use href="#sgrid"/></svg><svg class="i on"><use href="#svert"/></svg><svg class="i"><use href="#sedge"/></svg><b class="o"></b></div>
<div class="tb t-layout"><b class="grip"></b><svg class="i"><use href="#pzin"/></svg><svg class="i"><use href="#pzout"/></svg><svg class="i"><use href="#ppan"/></svg><svg class="i"><use href="#pfull"/></svg><svg class="i"><use href="#p11"/></svg><b class="s"></b><svg class="i"><use href="#pin4"/></svg><svg class="i"><use href="#pout4"/></svg><b class="s"></b><svg class="i"><use href="#pback"/></svg><svg class="i"><use href="#pfwd"/></svg><div class="combo c-pct"><span>100%</span><b class="v"></b></div><b class="s"></b><svg class="i ong"><use href="#draft"/></svg><svg class="i"><use href="#focus"/></svg><svg class="i"><use href="#chlay"/></svg><svg class="i"><use href="#ddp"/></svg><b class="o"></b></div>
<div class="tb t-cache"><b class="grip"></b><svg class="i"><use href="#refr"/></svg><svg class="i"><use href="#grefr"/></svg><div class="combo c-zero"><span>0</span><b class="v"></b></div><b class="s"></b><svg class="i"><use href="#flag"/></svg><b class="o"></b></div>
<div class="tb t-3d"><b class="grip"></b><span class="lb l-3d">3D Analyst<b class="d"></b></span><b class="s"></b><div class="old"><b></b></div><svg class="i"><use href="#contour"/></svg><svg class="i"><use href="#steep"/></svg><svg class="i"><use href="#los"/></svg><svg class="i"><use href="#ip"/></svg><svg class="i"><use href="#il"/></svg><svg class="i"><use href="#ig"/></svg><b class="s"></b><svg class="i"><use href="#prof"/></svg><b class="d off"></b><b class="s"></b><svg class="i"><use href="#scene"/></svg><b class="s"></b><svg class="i"><use href="#aglobe"/></svg><b class="o"></b></div>
</div>
<div class="row">
<div class="tb t-adv"><b class="grip"></b><svg class="i"><use href="#e1"/></svg><svg class="i"><use href="#e2"/></svg><svg class="i"><use href="#e3"/></svg><svg class="i"><use href="#e4"/></svg><svg class="i"><use href="#e5"/></svg><b class="s"></b><svg class="i"><use href="#e6"/></svg><svg class="i"><use href="#ball"/></svg><b class="s"></b><svg class="i"><use href="#e7"/></svg><svg class="i"><use href="#e8"/></svg><svg class="i"><use href="#e9"/></svg><svg class="i"><use href="#e10"/></svg><svg class="i"><use href="#e11"/></svg><b class="s"></b><svg class="i"><use href="#e12"/></svg><svg class="i"><use href="#e13"/></svg><b class="o"></b></div>
<div class="tb t-edit"><b class="grip"></b><span class="lb l-edit">Editor<b class="d"></b></span><b class="s"></b><svg class="i"><use href="#ea"/></svg><span class="gl ann"><svg><use href="#tri"/></svg>A</span><b class="s"></b><svg class="i"><use href="#eline"/></svg><svg class="i"><use href="#earc"/></svg><svg class="i"><use href="#etr"/></svg><b class="d off"></b><svg class="i"><use href="#epoint"/></svg><b class="s"></b><svg class="i"><use href="#ever"/></svg><svg class="i"><use href="#eresh"/></svg><svg class="i"><use href="#ecut"/></svg><svg class="i"><use href="#esplit"/></svg><svg class="i"><use href="#erot"/></svg><b class="s"></b><svg class="i"><use href="#eattr"/></svg><svg class="i"><use href="#esk"/></svg><b class="s"></b><svg class="i"><use href="#ecf"/></svg><b class="o"></b></div>
<div class="tb t-las"><b class="grip"></b><span class="lb l-las">LAS Dataset<b class="d"></b></span><b class="s"></b><div class="old"><b></b></div><b class="s"></b><svg class="i"><use href="#las"/></svg><b class="d off"></b><svg class="i"><use href="#las2"/></svg><b class="d off"></b><span class="lb l-filt">Filters<b class="d"></b></span><b class="s"></b><svg class="i"><use href="#al"/></svg><svg class="i"><use href="#ar"/></svg><svg class="i"><use href="#au"/></svg><svg class="i"><use href="#ad"/></svg><b class="s"></b><svg class="i"><use href="#w1"/></svg><svg class="i"><use href="#w2"/></svg><b class="o"></b></div>
</div>

<div class="work">
<aside class="toc">
<div class="cap toccap"><span>Table Of Contents</span><svg class="pin"><use href="#pinn"/></svg><svg class="cx"><use href="#x"/></svg></div>
<div class="toctools"><svg class="i on"><use href="#lorder"/></svg><svg class="i"><use href="#lsrc"/></svg><svg class="i"><use href="#lvis"/></svg><svg class="i"><use href="#lsel"/></svg><b class="s"></b><svg class="i"><use href="#opts"/></svg></div>
<div class="tree">
<div class="n root"><b class="pm"></b><svg class="li"><use href="#layers"/></svg><strong>Layers</strong></div>
<div class="n"><b class="pm"></b><b class="ck"></b><span class="hl">ZonaEstudio</span></div>
<div class="n sw"><b></b></div>
<div class="n"><b class="pm plus"></b><b class="ck"></b><span class="nm">Zonificacion_hidrografica_2013</span></div>
</div>
</aside>
<main class="mapframe">
<div class="maprow">
<svg class="map" viewBox="343 128 1538 674">
<g transform="translate(430 140) scale(.33333)">
<path class="zone" filter="url(#rough)" d="M872 66L888 84 908 80 935 84 965 70 982 78 1008 78 1018 98 1028 100 1030 120 1037 130 1055 128 1070 140 1085 155 1100 160 1113 180 1115 195 1135 205 1165 235 1190 255 1192 290 1205 310 1222 315 1233 340 1245 356 1236 368 1233 385 1222 393 1221 415 1215 435 1200 450 1185 458 1173 468 1178 480 1180 510 1170 540 1172 600 1168 620 1172 650 1163 690 1158 712 1162 735 1150 755 1134 770 1132 800 1122 825 1108 845 1108 862 1098 875 1093 890 1105 910 1108 922 1090 938 1102 940 1112 928 1136 948 1125 968 1108 985 1100 1000 1090 1025 1072 1050 1060 1065 1045 1085 1045 1110 1033 1130 1032 1155 1025 1178 1000 1176 980 1185 968 1205 953 1222 950 1242 930 1248 942 1268 925 1285 912 1290 900 1305 895 1322 882 1330 885 1360 865 1370 860 1395 850 1420 830 1448 808 1455 800 1480 792 1503 770 1495 762 1508 750 1538 760 1560 760 1590 755 1615 742 1628 745 1670 745 1695 752 1705 748 1730 715 1725 695 1735 680 1750 655 1756 630 1763 625 1785 605 1808 605 1825 588 1845 580 1875 570 1892 530 1896 505 1884 480 1884 470 1872 447 1880 447 1850 460 1830 457 1770 430 1748 403 1720 396 1690 396 1655 380 1640 350 1640 315 1632 320 1605 333 1570 347 1552 345 1520 350 1500 345 1475 337 1458 346 1445 345 1415 335 1387 300 1385 285 1365 275 1335 250 1322 245 1300 237 1265 262 1250 262 1235 248 1222 262 1190 245 1160 233 1150 225 1110 222 1095 212 1085 214 1060 202 1045 202 1020 210 1010 195 1000 185 978 175 965 165 950 115 922 105 900 92 880 85 865 70 855 75 830 67 815 66 775 75 745 82 728 62 715 45 685 48 665 62 650 70 630 90 635 110 640 117 630 107 605 120 580 150 575 165 545 182 515 200 525 235 522 265 532 295 513 310 490 360 472 370 452 415 430 458 430 468 412 500 405 545 400 585 385 615 392 635 405 658 411 655 355 682 340 680 322 650 310 605 302 607 280 622 255 643 245 640 210 628 195 580 183 597 155 645 143 680 142 750 120 758 108 790 83 825 88 860 75z"/>
<g class="basin"><path d="M665 411L700 400 770 396 785 408 808 420 845 412 870 418 900 448 935 482 980 498 1025 468 1050 448 1058 432 1075 432 1105 468 1130 482 1170 470"/>
<path d="M664 415L655 460 650 495 632 512 600 530 555 543 535 533 508 537 498 568 470 578 443 595 435 630 432 650 437 665 433 695 445 708 465 710 450 740 448 760 428 768 425 780 440 787 450 777 470 788 500 820 525 875 538 885 545 915 562 945 568 985 562 1025 540 1075 515 1125 511 1160"/>
<path d="M268 1232L320 1225 345 1210 395 1205 462 1193 458 1168 480 1160 511 1158 518 1165 570 1155 620 1125 660 1110 700 1108 740 1110 775 1120 790 1135 815 1145 832 1165 835 1205 855 1232 875 1240 910 1238 928 1248"/></g>
</g>
<g class="zl"><text x="730" y="236.500">2801</text><text x="511" y="411.500">2804</text><text x="699.500" y="405.500">2802</text><text x="613.500" y="648.500">2805</text></g>
</svg>
<div class="vs"><b></b></div>
</div>
<div class="mapfoot"><svg class="m act"><use href="#mapv"/></svg><svg class="m"><use href="#layv"/></svg><b class="ms"></b><svg class="m"><use href="#rfr"/></svg><svg class="m"><use href="#pause"/></svg><b class="hs"></b></div>
</main>
<div class="tabs"><div class="vt k1"><svg><use href="#toc"/></svg><svg class="over"><use href="#info"/></svg><span>Identify</span></div><div class="vt k2"><svg><use href="#cat"/></svg><span>Catalog</span></div><div class="vt k3"><svg><use href="#search"/></svg><span>Search</span></div><div class="vt k4"><svg><use href="#create"/></svg><span>Create Features</span></div></div>
</div>

<section class="table">
<div class="cap"><span>Table</span><svg class="pin"><use href="#pinn"/></svg><svg class="cx"><use href="#x"/></svg></div>
<div class="ttools"><svg class="i on dark"><use href="#opts"/></svg><b class="d ddon"></b><b class="s"></b><svg class="i"><use href="#rel"/></svg><b class="d"></b><b class="s"></b><svg class="i"><use href="#selatt"/></svg><svg class="i"><use href="#switch"/></svg><svg class="i"><use href="#clear"/></svg><svg class="i"><use href="#zsel"/></svg><svg class="i"><use href="#del"/></svg></div>
<div class="cap"><span>ZonaEstudio</span><svg class="cx"><use href="#x"/></svg></div>
<div class="grid">
<div class="hr"><b></b><b>FID</b><b>Shape *</b><b>Id</b><b class="foc">Akm2</b><b>Pkm</b><b>ZH</b></div>
<div class="dr"><b></b><span>0</span><span class="l">Polygon</span><span>0</span><span>0</span><span>0</span><span></span></div>
</div>
<div class="navb"><svg class="i"><use href="#first"/></svg><svg class="i"><use href="#prev"/></svg><span class="rec">0</span><svg class="i"><use href="#next"/></svg><svg class="i"><use href="#last"/></svg><b class="s"></b><svg class="i on"><use href="#recall"/></svg><svg class="i"><use href="#recsel"/></svg><b class="s"></b><span class="cnt">(0 out of 1 Selected)</span></div>
<div class="btabs"><span>ZonaEstudio</span></div>
</section>
<footer class="status"><b></b><b></b><span>-74.629&nbsp; 10.099 Decimal Degrees</span></footer>

<div class="dlg">
<div class="dt"><span>Add Field</span><svg viewBox="0 0 12 12"><path d="M1 1l10 10M11 1L1 11" stroke="#777"/></svg></div>
<div class="fr"><label>Name:</label><div class="inp">Akm2</div></div>
<div class="fr ty"><label>Type:</label><div class="selc">Double<b class="v"></b></div></div>
<div class="fs"><span class="lg">Field Properties</span>
<div class="pt"><span>Precision</span><span>0</span><span>Scale</span><span>0</span></div></div>
<div class="bt"><span>OK</span><span>Cancel</span></div>
</div>
</div>
</body>
</html>
```
FILE: styles.css
```css
* { box-sizing: border-box; }
body { margin: 0; font-family: "Open Sans", "Noto Sans", sans-serif; font-size: 12px; letter-spacing: -.35px; color: #000; overflow: hidden; }
.sprite { position: absolute; width: 0; height: 0; }
.app { position: relative; width: 1921px; height: 1032px; overflow: hidden; display: flex; flex-direction: column; background: linear-gradient(90deg, #f1f1f1, #fbfbfb 70%, #fcfcfc); }
.g { fill: none; stroke: #acacac; }
.gf { fill: #acacac; stroke: none; }

.titlebar { height: 23px; flex: none; display: flex; align-items: center; padding-left: 4px; background: linear-gradient(90deg, #f1f1f1, #f6f6f6); color: #999; }
.logo { width: 16px; height: 16px; margin-right: 6px; }
.wtitle { letter-spacing: -.3px; }
.winctl { width: 110px; height: 20px; margin: 0 14px 3px auto; }
.menu { height: 25px; flex: none; display: flex; align-items: center; gap: 16px; padding-left: 14px; }
.row { height: 26px; flex: none; display: flex; align-items: flex-start; }
.tb { height: 24px; display: flex; align-items: center; background: linear-gradient(#fcfcfc, #efefef); border-radius: 3px; flex: none; }
.t-std, .t-tools { margin-left: 5px; }
.t-draw { margin-left: 23px; }
.t-snap, .t-layout { margin-left: 27px; }
.t-cache { margin-left: 52px; }
.t-3d { margin-left: 3px; }
.t-adv { margin-left: 16px; }
.t-edit { margin-left: 15px; }
.t-las { margin-left: 26px; }
.i { width: 22px; height: 22px; padding: 3px; flex: none; }
.on { border: 1px solid #0078d7; background: #dcebf8; padding: 2px; }
.ong { border: 1px solid #b9cbdc; background: #dfe7ee; padding: 2px; margin-left: 1px; }
.gl { width: 22px; height: 22px; flex: none; display: flex; flex-direction: column; align-items: center; justify-content: center; font: bold 14px/14px "Liberation Serif", serif; letter-spacing: 0; color: #111; }
.gl svg { width: 20px; height: 14px; flex: none; }
.big { font-size: 17px; }
.it { font-style: italic; }
.un { text-decoration: underline; text-underline-offset: 2px; }
.bar { border-bottom: 3px solid #000; height: 19px; width: 18px; margin: 0 2px; font-size: 15px; }
.yel { border-color: #ffffa8; }
.grn { border-color: #5f0; }
.xyb { font: bold 9px/8px "Liberation Sans", sans-serif; color: #14599c; }
.xyb svg { width: 16px; height: 8px; }
.ann { flex-direction: row; font: bold 10px/10px "Liberation Sans", sans-serif; color: #aaa; align-items: flex-end; padding-bottom: 3px; }
.ann svg { width: 9px; height: 15px; }
.grip { width: 8px; height: 15px; flex: none; background: radial-gradient(circle at 4px 2px, #b0b0b0 1px, transparent 1.3px) 0 0 / 8px 4px; }
.s { width: 6px; height: 18px; flex: none; background: linear-gradient(#bdbdbd, #bdbdbd) 2px 0 / 1px 100% no-repeat; }
.s.w8 { width: 8px; }
.d { width: 11px; height: 18px; flex: none; display: flex; align-items: center; justify-content: center; }
.d::after { content: ""; border: 3px solid transparent; border-top-color: #111; border-bottom: 0; }
.d.off::after { border-top-color: #999; }
.d.w12, .t-las > .d { width: 12px; }
.d.w16 { width: 16px; }
.o { width: 11px; height: 24px; margin-left: 2px; flex: none; position: relative; top: 1px; border-radius: 0 2px 2px 0; background: linear-gradient(#f4f4f4, #c9c9c9 60%, #9a9a9a); display: flex; flex-direction: column; align-items: center; justify-content: flex-end; padding-bottom: 3px; gap: 1px; }
.o::before { content: ""; width: 5px; height: 1px; background: #111; box-shadow: 0 1px #fff; }
.o::after { content: ""; border: 3px solid transparent; border-top-color: #111; border-bottom: 0; margin-top: 1px; }
.o.tight { margin-left: 1px; }
.t-snap .o, .t-3d .o { margin-left: 3px; }
.lb { display: flex; justify-content: space-between; align-items: center; padding-left: 4px; white-space: nowrap; flex: none; }
.l-draw { width: 59px; }
.l-snap { width: 64px; }
.l-3d { width: 71px; }
.l-edit { width: 45px; }
.l-las { width: 77px; }
.l-filt { width: 46px; }
.combo { height: 22px; border: 1px solid #898989; border-radius: 2px; background: #fff; display: flex; align-items: center; padding-left: 3px; flex: none; }
.v { margin-left: auto; width: 6px; height: 6px; border: solid #555; border-width: 0 1px 1px 0; transform: translateY(-2px) rotate(45deg); margin-right: 6px; flex: none; }
.c-scale { width: 148px; margin-left: 5px; letter-spacing: -.25px; padding-bottom: 2px; padding-left: 2px; }
.c-font { width: 170px; font-family: "Liberation Sans", sans-serif; -webkit-text-stroke: .3px; }
.fi { width: 15px; height: 16px; margin-right: 3px; }
.c-size { width: 46px; margin-right: -1px; padding-left: 2px; letter-spacing: -.6px; }
.c-pct { width: 59px; border-color: #ccc; padding-left: 2px; }
.c-pct .v { border-color: #aaa; }
.c-pct span { background: #0078d7; color: #3c5a78; width: 27px; height: 15px; line-height: 15px; letter-spacing: -.8px; }
.c-zero { width: 55px; padding-left: 2px; }
.c-zero span { background: #0078d7; color: #fff; height: 15px; line-height: 15px; width: 7px; }
.old { width: 178px; height: 20px; border: 2px solid #7c7c7c; border-right: 1px solid #ccc; border-bottom: 1px solid #ccc; background: #efefef; flex: none; display: flex; justify-content: flex-end; margin-right: 2px; }
.t-las .old { margin-right: 1px; }
.old b { width: 16px; height: 100%; border: 1px solid #fff; border-right-color: #888; border-bottom-color: #888; display: flex; align-items: center; justify-content: center; }
.old b::after { content: ""; border: 4px solid transparent; border-top-color: #888; border-bottom: 0; }

.work { height: 698px; flex: none; display: flex; }
.toc { width: 335px; margin-left: 2px; height: 692px; flex: none; display: flex; flex-direction: column; }
.cap { height: 20px; flex: none; display: flex; align-items: center; padding: 0 5px 1px 4px; background: linear-gradient(90deg, #bfcddc, #d7e4f2 75%); }
.cap span { margin-right: auto; letter-spacing: -.3px; }
.pin { width: 10px; height: 11px; margin-right: 5px; }
.cx { width: 9px; height: 9px; margin-bottom: 1px; }
.toccap { padding-right: 5px; }
.toctools { height: 26px; flex: none; display: flex; align-items: center; padding: 0 0 1px 4px; background: linear-gradient(#fcfcfc, #f0f0f0); }
.tree { flex: 1; width: 334px; border: 1px solid #828790; background: #fff; padding-top: 1px; }
.n { height: 19px; display: flex; align-items: center; padding-left: 27px; }
.n.root { padding-left: 8px; }
.pm { width: 9px; height: 9px; border: 1px solid #999; border-radius: 1px; background: linear-gradient(#4060b0, #4060b0) center / 5px 1px no-repeat; flex: none; }
.pm.plus { background: linear-gradient(#4060b0, #4060b0) center / 5px 1px no-repeat, linear-gradient(#4060b0, #4060b0) center / 1px 5px no-repeat; }
.li { width: 16px; height: 15px; margin: 0 5px 0 6px; }
.ck { width: 11px; height: 11px; border: 1px solid #000; margin: 0 6px 0 8px; display: flex; align-items: center; justify-content: center; flex: none; }
.ck::after { content: ""; width: 3px; height: 6px; border: solid #000; border-width: 0 2px 2px 0; transform: translateY(-1px) rotate(42deg); }
.hl { background: #0078d7; color: #fff; height: 19px; line-height: 17px; width: 70px; padding-left: 2px; white-space: nowrap; letter-spacing: -.22px; }
.nm { padding-left: 2px; letter-spacing: -.28px; }
.sw b { width: 18px; height: 13px; border: 4px solid #000; border-radius: 3px; margin-left: 30px; background: #fff; }
.mapframe { margin: 0 0 0 4px; width: 1558px; height: 693px; flex: none; display: flex; flex-direction: column; border: 1px solid #e3e3e3; border-left: 2px solid #7d7d7d; border-top: 2px solid #6a6a6a; background: #efefef; }
.maprow { height: 674px; flex: none; display: flex; }
.map { width: 1538px; height: 674px; background: #fdfefe; flex: none; }
.zone { fill: #ccc; stroke: #000; stroke-width: 13; stroke-linejoin: round; }
.basin { fill: none; stroke: #fff; stroke-width: 3.300; }
.zl { font: 13px "Liberation Sans", sans-serif; letter-spacing: .1px; text-anchor: middle; fill: #111; }
.vs { width: 17px; border-left: 2px solid #e3e3e3; background: #efefef; }
.vs b { display: block; width: 2px; height: 77px; margin: 156px 0 0 6px; background: #858585; }
.mapfoot { flex: 1; border-top: 1px solid #dcdcdc; display: flex; align-items: center; padding: 0 0 3px 1px; }
.m { width: 16px; height: 13px; flex: none; }
.act { background: #cce6fb; }
.ms { width: 1px; height: 12px; background: #999; margin: 0 5px 0 3px; }
.m + .ms + .m { margin-right: 1px; }
.hs { width: 495px; height: 2px; background: #858585; margin-left: 700px; }
.tabs { margin: 2px 0 0 3px; display: flex; flex-direction: column; width: 19px; }
.vt { border: 1px solid #a0a0a0; border-right: 0; border-radius: 4px 0 0 4px; background: #f3f3f3; padding: 4px 0 0 2px; display: flex; flex-direction: column; position: relative; margin-bottom: -1px; }
.vt svg { width: 16px; height: 16px; flex: none; }
.vt .over { position: absolute; top: 7px; left: 4px; width: 12px; height: 12px; }
.vt span { writing-mode: vertical-rl; font: 12px/15px "Liberation Sans", sans-serif; letter-spacing: .1px; color: #666; margin-top: 4px; white-space: nowrap; }
.k1 { height: 68px; }
.k2 { height: 72px; }
.k3 { height: 68px; }
.k4 { height: 118px; }

.table { width: 1898px; margin-left: 2px; flex: none; height: 188px; display: flex; flex-direction: column; }
.ttools { height: 26px; flex: none; display: flex; align-items: center; padding: 0 0 2px 4px; background: linear-gradient(#fcfcfc, #f0f0f0); }
.dark { background: #b9dbf6; }
.ddon { border: 1px solid #0078d7; border-left: 0; background: #d3e7f8; height: 22px; }
.grid { height: 72px; flex: none; border: 4px double #7a7a7a; border-right: 1px solid #ddd; border-bottom: 1px solid #ddd; border-top: 4px double #666; background: #efefef; font-size: 13.500px; letter-spacing: -.1px; padding-left: 1px; }
.hr, .dr { display: grid; grid-template-columns: 24px 60px 108px 48px 72px 60px 48px; height: 19px; text-align: center; line-height: 19px; }
.hr b { border: solid #000; border-width: 0 2px 2px 0; font-size: 13.500px; background: #efefef; letter-spacing: 0; line-height: 18px; box-shadow: inset 1px 1px #fff; }
.hr .foc { outline: 1px dotted #000; outline-offset: -1px; border-color: #000; }
.dr { height: 19px; }
.dr > * { border: solid #6b6b6b; border-width: 0 1px 1px 0; background: #fff; text-align: right; padding-right: 3px; line-height: 19px; overflow: hidden; }
.dr b { background: #efefef; border-right: 2px solid #000; border-bottom: 2px solid #000; }
.dr .l { text-align: left; padding-left: 2px; }
.navb { height: 28px; flex: none; border: 1px solid #ddd; border-left: 2px solid #8a8a8a; background: linear-gradient(#fcfcfc, #efefef); display: flex; align-items: center; padding: 0 0 2px 4px; }
.rec { width: 58px; height: 21px; line-height: 20px; background: #fff; text-align: right; padding-right: 3px; margin: 0 1px; }
.cnt { padding-left: 4px; letter-spacing: -.36px; }
.navb svg.i:nth-of-type(6) { padding-top: 1px; padding-bottom: 5px; }
.btabs { flex: 1; padding: 0 0 0 2px; }
.btabs span { display: block; width: 79px; height: 20px; border: 1px solid #999; border-top: 0; border-radius: 0 0 4px 4px; background: #fff; line-height: 18px; padding-left: 5px; letter-spacing: -.3px; }
.status { height: 20px; flex: none; background: #efefef; display: flex; align-items: center; }
.status b { width: 18px; height: 18px; border-right: 2px solid #f8f8f8; flex: none; }
.status b:first-child { width: 1656px; }
.status span { padding: 0 0 1px 5px; font-size: 11.500px; letter-spacing: -.28px; }

.dlg { position: absolute; left: 1126px; top: 309px; width: 293px; height: 297px; border: 1px solid #b4b4b4; border-radius: 8px; background: #efefef; box-shadow: 0 18px 36px rgba(0,0,0,.2), 0 0 20px rgba(0,0,0,.09); font: 11px "Liberation Sans", sans-serif; letter-spacing: -.1px; color: #111; }
.dt { height: 26px; border-radius: 8px 8px 0 0; background: #f3f3f3; display: flex; align-items: center; justify-content: space-between; padding: 0 9px 1px 4px; color: #939393; font: 12px "Open Sans", sans-serif; letter-spacing: -.2px; }
.dt svg { width: 12px; height: 12px; margin-bottom: 2px; }
.fr { display: flex; padding: 10px 0 0 11px; }
.fr label { width: 66px; padding-top: 1px; }
.inp { width: 192px; height: 24px; border: 1px solid #e5e5e5; border-bottom-color: #868686; border-radius: 3px; background: #fff; padding: 2px; }
.ty { padding-top: 12px; }
.selc { width: 192px; height: 21px; border: 1px solid #d0d0d0; border-bottom-color: #b8b8b8; border-radius: 3px; background: #fdfdfd; display: flex; align-items: center; padding: 0 0 1px 3px; }
.fs { margin: 18px 10px 0 11px; height: 142px; border: 1px solid #dcdcdc; }
.lg { display: block; width: 82px; height: 14px; line-height: 14px; background: #efefef; padding-left: 3px; margin: -7px 0 0 5px; letter-spacing: -.3px; }
.pt { margin: 7px 0 0 11px; width: 245px; display: grid; grid-template-columns: 122px 122px; border: solid #6e6e6e; border-width: 1px 0 0 1px; }
.pt span { height: 16px; line-height: 15px; border: solid #6e6e6e; border-width: 0 1px 1px 0; background: #fff; padding-left: 2px; }
.bt { display: flex; justify-content: flex-end; gap: 8px; padding: 10px 11px 0 0; }
.bt span { width: 73px; height: 21px; border: 1px solid #d0d0d0; border-bottom-color: #bbb; border-radius: 4px; background: #fdfdfd; text-align: center; line-height: 19px; }
```
